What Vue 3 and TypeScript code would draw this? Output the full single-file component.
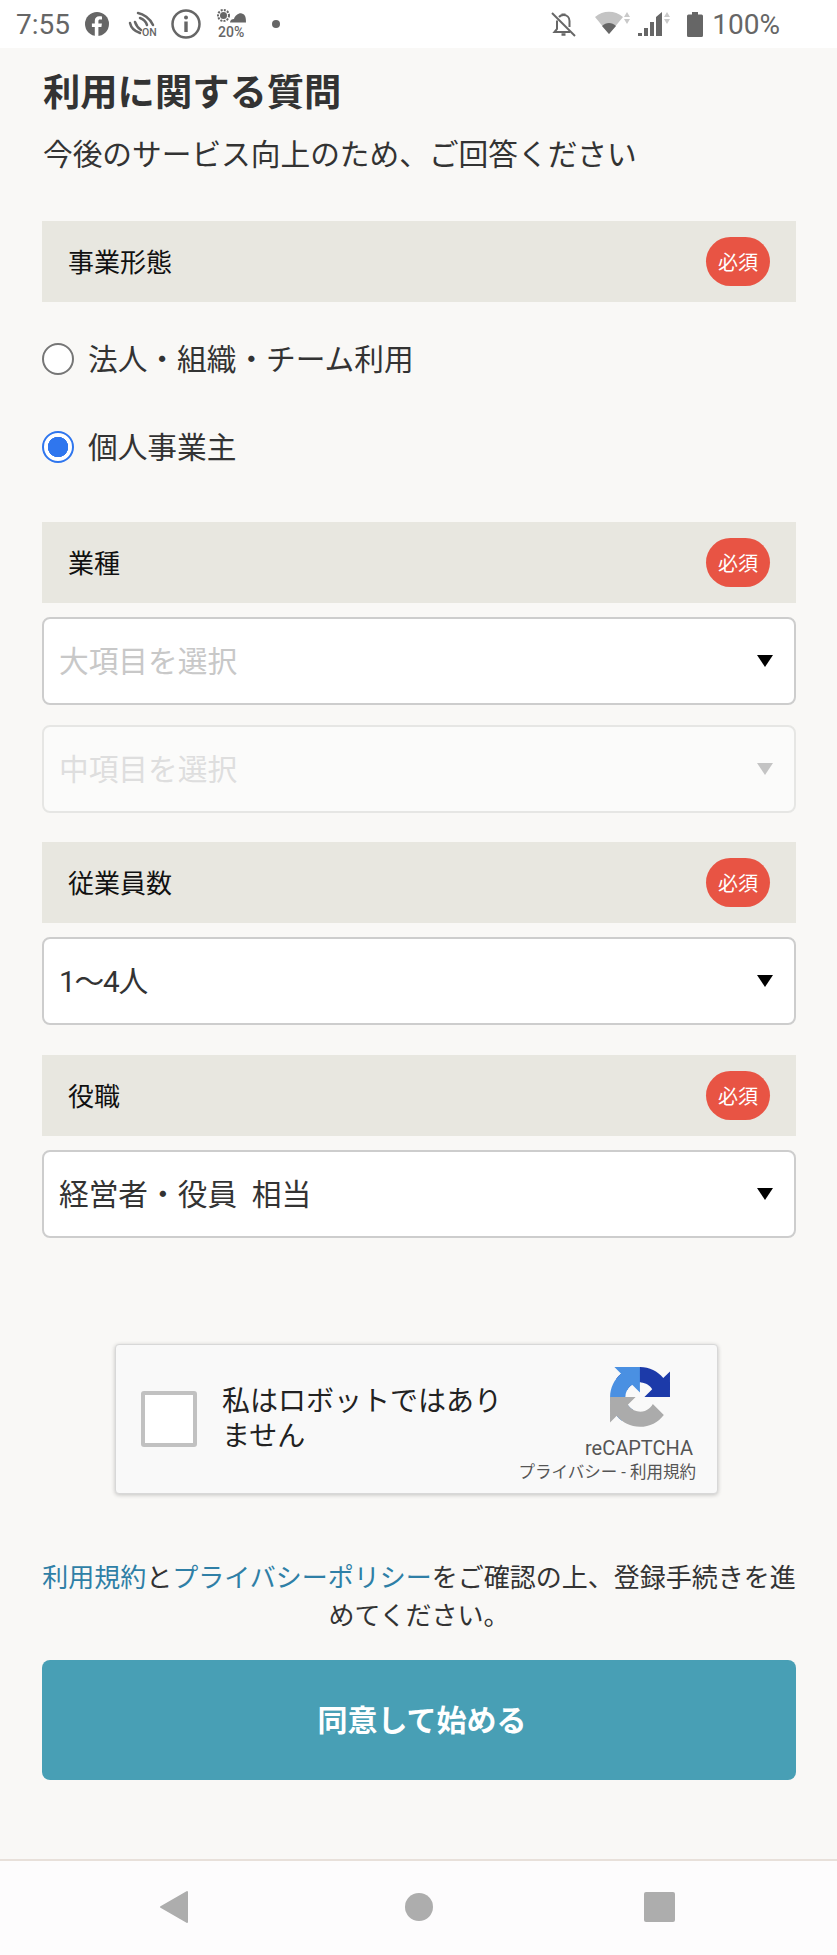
<script setup lang="ts">
import { ref } from 'vue';

const businessType = ref('individual');

const businessOptions = [
    { value: 'corporate', label: '法人・組織・チーム利用' },
    { value: 'individual', label: '個人事業主' },
];
</script>

<template>
    <div class="screen">
        <div class="status-bar">
            <span class="clock">7:55</span>
            <svg class="ic-fb" width="24" height="24" viewBox="0 0 24 24">
                <circle cx="12" cy="12" r="12" fill="#666" />
                <path d="M13.4 24v-9h3l.5-3.6h-3.5V9.3c0-1 .4-1.7 1.8-1.7H17V4.4c-.5 0-1.500-.2-2.700-.2-2.700 0-4.500 1.600-4.500 4.600v2.600H6.900V15h2.900v9z" fill="#fff" />
            </svg>
            <svg class="ic-nfc" width="30" height="28" viewBox="0 0 30 28" fill="none" stroke="#666" stroke-width="2.500" stroke-linecap="round">
                <path d="M10 3C15 4 22 8 25 15" />
                <path d="M12 8C15 9 18 12 19 15" />
                <path d="M2 13C3 18 6 21 12 23" />
                <path d="M7 12C8 15 10 18 13 20" />
                <text x="14" y="26" font-size="10.500" fill="#666" stroke="none" font-family="Roboto, sans-serif" font-weight="500">ON</text>
            </svg>
            <svg class="ic-info" width="30" height="30" viewBox="0 0 30 30">
                <circle cx="15" cy="15" r="13.500" fill="none" stroke="#666" stroke-width="2.500" />
                <circle cx="15" cy="8.500" r="2" fill="#666" />
                <rect x="13.300" y="12.500" width="3.400" height="10.500" fill="#666" />
            </svg>
            <svg class="ic-weather" width="32" height="33" viewBox="0 0 32 33">
                <circle cx="7.500" cy="7.500" r="3.500" fill="#666" />
                <circle cx="7.500" cy="7.500" r="5.500" fill="none" stroke="#666" stroke-width="2" stroke-dasharray="2 1.200" />
                <path d="M14 14.500C14 12 16 11 18 11 19 7 24 4 27 6 30 7 30 12 30 14.500Z" fill="#666" />
                <text x="2" y="29" font-size="14" font-weight="500" fill="#666" font-family="Roboto, sans-serif">20%</text>
            </svg>
            <span class="dot"></span>
            <span class="spacer"></span>
            <svg class="ic-bell" width="25" height="25" viewBox="0 0 25 25" fill="none" stroke="#666" stroke-width="2">
                <path d="M6 8.500V17L3.500 20H19" />
                <path d="M8 5C9 3.800 10.500 3 12.500 3 16 3 18.500 5.500 18.500 9V15" />
                <path d="M10.500 2.500h4" />
                <path d="M10.500 22.500h4" stroke-width="2.500" />
                <path d="M1 1 24 24" />
            </svg>
            <svg class="ic-wifi" width="35" height="26" viewBox="0 0 35 26">
                <path d="M0 6C8-1 20-1 28 6L14 23Z" fill="#c4c4c4" />
                <path d="M7 15C11 11 17 11 21 15L14 23Z" fill="#666" />
                <path d="M32 1 35 6H29ZM29 8H35L32 13Z" fill="#c9c9c9" />
            </svg>
            <svg class="ic-signal" width="33" height="26" viewBox="0 0 33 26">
                <path d="M0 25h4v-3H0zM6 25h4v-8H6zM12 25h4V11h-4zM18 25h6V1l-6 5z" fill="#666" />
                <path d="M29 1 32 6H26ZM26 8H32L29 13Z" fill="#c9c9c9" />
            </svg>
            <svg class="ic-battery" width="16" height="25" viewBox="0 0 16 25">
                <path d="M5 0h6v2.500h3.500A1.500 1.500 0 0 1 16 4v19.500a1.500 1.500 0 0 1-1.500 1.500H1.500A1.500 1.500 0 0 1 0 23.500V4a1.500 1.500 0 0 1 1.500-1.500H5z" fill="#666" />
            </svg>
            <span class="battery-level">100%</span>
        </div>

        <main class="content">
            <h1 class="title">利用に関する質問</h1>
            <p class="lead">今後のサービス向上のため、ご回答ください</p>

            <div class="section-head first">
                <span class="head-label">事業形態</span>
                <span class="required">必須</span>
            </div>
            <div class="radios">
                <label v-for="opt in businessOptions" :key="opt.value" class="radio-row" @click="businessType = opt.value">
                    <span class="radio" :class="{ checked: businessType === opt.value }"></span>
                    <span class="radio-label">{{ opt.label }}</span>
                </label>
            </div>

            <div class="section-head industry">
                <span class="head-label">業種</span>
                <span class="required">必須</span>
            </div>
            <div class="select placeholder sel-major">
                <span class="select-text">大項目を選択</span>
                <i class="caret"></i>
            </div>
            <div class="select disabled sel-minor">
                <span class="select-text">中項目を選択</span>
                <i class="caret"></i>
            </div>

            <div class="section-head staff">
                <span class="head-label">従業員数</span>
                <span class="required">必須</span>
            </div>
            <div class="select sel-after">
                <span class="select-text count-value">1〜4人</span>
                <i class="caret"></i>
            </div>

            <div class="section-head role">
                <span class="head-label">役職</span>
                <span class="required">必須</span>
            </div>
            <div class="select sel-after">
                <span class="select-text">経営者・役員&nbsp;&nbsp;相当</span>
                <i class="caret"></i>
            </div>

            <div class="captcha">
                <span class="captcha-box"></span>
                <span class="captcha-label">私はロボットではありません</span>
                <div class="captcha-brand">
                    <svg class="captcha-logo" width="60" height="60" viewBox="0 0 64 64">
                        <path d="M64 31.955l-.033-1.37V4.687l-7.16 7.16C50.948 4.674 42.033.093 32.050.093c-10.400 0-19.622 4.960-25.458 12.640l11.736 11.860c1.150-2.127 2.784-3.955 4.757-5.320 2.050-1.600 4.952-2.910 8.962-2.910.485 0 .860.057 1.137.163 4.973.393 9.284 3.138 11.800 7.120l-8.300 8.300c10.516-.040 22.400-.066 27.453.002" fill="#1c3aa9" />
                        <path d="M31.952.003l-1.370.033H4.687l7.160 7.160C4.674 13.056.093 21.970.093 31.954c0 10.400 4.960 19.622 12.640 25.458l11.860-11.736c-2.127-1.150-3.955-2.784-5.320-4.757-1.600-2.050-2.910-4.952-2.910-8.962 0-.485.057-.860.163-1.137.393-4.973 3.138-9.284 7.120-11.800l8.300 8.300c-.040-10.516-.066-22.400.002-27.453" fill="#4a90e2" />
                        <path d="M.002 31.953l.033 1.370v25.896l7.160-7.160c5.860 7.173 14.774 11.754 24.758 11.754 10.400 0 19.622-4.960 25.458-12.640L45.675 39.437c-1.150 2.127-2.784 3.955-4.757 5.320-2.050 1.600-4.952 2.910-8.962 2.910-.485 0-.860-.057-1.137-.163-4.973-.393-9.284-3.138-11.800-7.120l8.300-8.300c-10.516.040-22.400.066-27.453-.002" fill="#ababab" />
                    </svg>
                    <span class="captcha-name">reCAPTCHA</span>
                    <span class="captcha-links">プライバシー - 利用規約</span>
                </div>
            </div>

            <p class="terms">
                <a class="link">利用規約</a>と<a class="link">プライバシーポリシー</a>をご確認の上、登録手続きを進めてください。
            </p>

            <button type="button" class="submit">同意して始める</button>
        </main>

        <nav class="nav-bar">
            <svg width="30" height="34" viewBox="0 0 30 34">
                <path d="M28 2V32L2 17Z" fill="#adadad" stroke="#adadad" stroke-width="2" stroke-linejoin="round" />
            </svg>
            <span class="nav-home"></span>
            <span class="nav-recent"></span>
        </nav>
    </div>
</template>

<style scoped>
.screen {
    width: 837px;
    height: 1955px;
    display: flex;
    flex-direction: column;
    background: #f9f8f6;
    font-family: Roboto, "Noto Sans CJK JP", sans-serif;
    color: #333;
    overflow: hidden;
}

.status-bar {
    height: 48px;
    flex-shrink: 0;
    display: flex;
    align-items: center;
    padding: 0 57px 0 16px;
    background: #fff;
    color: #666;
    font-size: 28px;
}

.status-bar svg {
    flex-shrink: 0;
}

.clock {
    width: 55px;
}

.ic-fb {
    margin-left: 14px;
}

.ic-nfc {
    margin-left: 19px;
}

.ic-info {
    margin-left: 13px;
}

.ic-weather {
    margin-left: 15px;
}

.dot {
    width: 8px;
    height: 8px;
    margin-left: 24px;
    border-radius: 50%;
    background: #666;
}

.spacer {
    flex: 1;
}

.ic-wifi {
    margin-left: 19px;
}

.ic-signal {
    margin-left: 8px;
}

.ic-battery {
    margin-left: 16px;
}

.battery-level {
    margin-left: 9px;
}

.content {
    flex: 1;
    padding: 0 41px 0 42px;
}

.title {
    margin: 22px 0 0 1px;
    font-size: 37.300px;
    line-height: 46px;
    font-weight: 700;
    color: #333;
}

.lead {
    margin: 17px 0 0 1px;
    font-size: 29.700px;
    line-height: 44px;
    color: #333;
}

.section-head {
    height: 81px;
    display: flex;
    align-items: center;
    justify-content: space-between;
    padding: 0 26px;
    background: #e8e7e0;
    font-size: 26px;
    color: #111;
}

.head-label,
.radio-label,
.select-text {
    padding-bottom: 3px;
}

.section-head.first {
    margin-top: 44px;
}

.section-head.industry {
    margin-top: 53px;
}

.section-head.staff {
    margin-top: 29px;
}

.section-head.role {
    margin-top: 30px;
}

.required {
    width: 64px;
    height: 49px;
    display: flex;
    align-items: center;
    justify-content: center;
    border-radius: 25px;
    background: #e85444;
    color: #fff;
    font-size: 20px;
}

.radios {
    display: flex;
    flex-direction: column;
    gap: 44px;
    margin-top: 35px;
}

.radio-row {
    height: 44px;
    display: flex;
    align-items: center;
    gap: 14px;
    font-size: 29.700px;
    color: #333;
}

.radio {
    width: 32px;
    height: 32px;
    box-sizing: border-box;
    border: 2px solid #767676;
    border-radius: 50%;
    background: #fff;
}

.radio.checked {
    border-color: #2f76ee;
    background: radial-gradient(circle, #2f76ee 0 10px, #fff 10.500px);
}

.select {
    height: 88px;
    box-sizing: border-box;
    display: flex;
    align-items: center;
    justify-content: space-between;
    padding: 0 21px 0 15px;
    border: 2px solid #cdcdcd;
    border-radius: 8px;
    background: #fff;
    font-size: 29.700px;
    color: #333;
}

.sel-major {
    margin-top: 14px;
}

.sel-minor {
    margin-top: 20px;
}

.sel-after {
    margin-top: 14px;
}

.select.placeholder {
    color: #c8c8c8;
}

.select.disabled {
    border-color: #e6e6e4;
    background: #fbfbfa;
    color: #dedede;
}

.count-value {
    letter-spacing: -1.200px;
}

.caret {
    width: 0;
    height: 0;
    border-left: 8px solid transparent;
    border-right: 8px solid transparent;
    border-top: 12px solid #000;
}

.select.disabled .caret {
    border-top-color: #c4c4c4;
}

.captcha {
    width: 603px;
    height: 150px;
    box-sizing: border-box;
    display: flex;
    align-items: center;
    margin: 106px 0 0 73px;
    padding: 0 22px 0 25px;
    border: 1px solid #d8d8d8;
    border-radius: 4px;
    background: #f9f9f9;
    box-shadow: 0 1px 4px rgba(0, 0, 0, 0.22);
}

.captcha-box {
    width: 56px;
    height: 56px;
    flex-shrink: 0;
    box-sizing: border-box;
    border: 4px solid #c1c1c1;
    border-radius: 3px;
    background: #fff;
}

.captcha-label {
    width: 282px;
    margin-left: 25px;
    font-size: 28px;
    line-height: 35px;
    color: #222;
}

.captcha-brand {
    flex: 1;
    align-self: stretch;
    display: flex;
    flex-direction: column;
    align-items: flex-end;
    padding-top: 22px;
    color: #555;
    white-space: nowrap;
}

.captcha-logo {
    margin-right: 25px;
}

.captcha-name {
    margin: 8px 2px 0 0;
    font-size: 20px;
    line-height: 26px;
}

.captcha-links {
    margin-right: -1px;
    font-size: 16.500px;
    line-height: 24px;
}

.terms {
    margin: 65px 0 0;
    font-size: 26px;
    line-height: 38px;
    text-align: center;
    color: #333;
}

.link {
    color: #2f7fa6;
}

.submit {
    display: block;
    width: 100%;
    height: 120px;
    margin-top: 25px;
    padding: 0 0 5px 6px;
    border: 0;
    border-radius: 8px;
    background: #489fb5;
    color: #fff;
    font-family: inherit;
    font-size: 30px;
    font-weight: 700;
}

.nav-bar {
    height: 96px;
    flex-shrink: 0;
    box-sizing: border-box;
    display: flex;
    align-items: center;
    justify-content: space-between;
    padding: 0 162px 2px 159px;
    border-top: 2px solid #e8e0da;
    background: #fdfcfd;
}

.nav-home {
    width: 28px;
    height: 28px;
    margin-left: 4px;
    border-radius: 50%;
    background: #adadad;
}

.nav-recent {
    width: 31px;
    height: 30px;
    border-radius: 2px;
    background: #adadad;
}
</style>
